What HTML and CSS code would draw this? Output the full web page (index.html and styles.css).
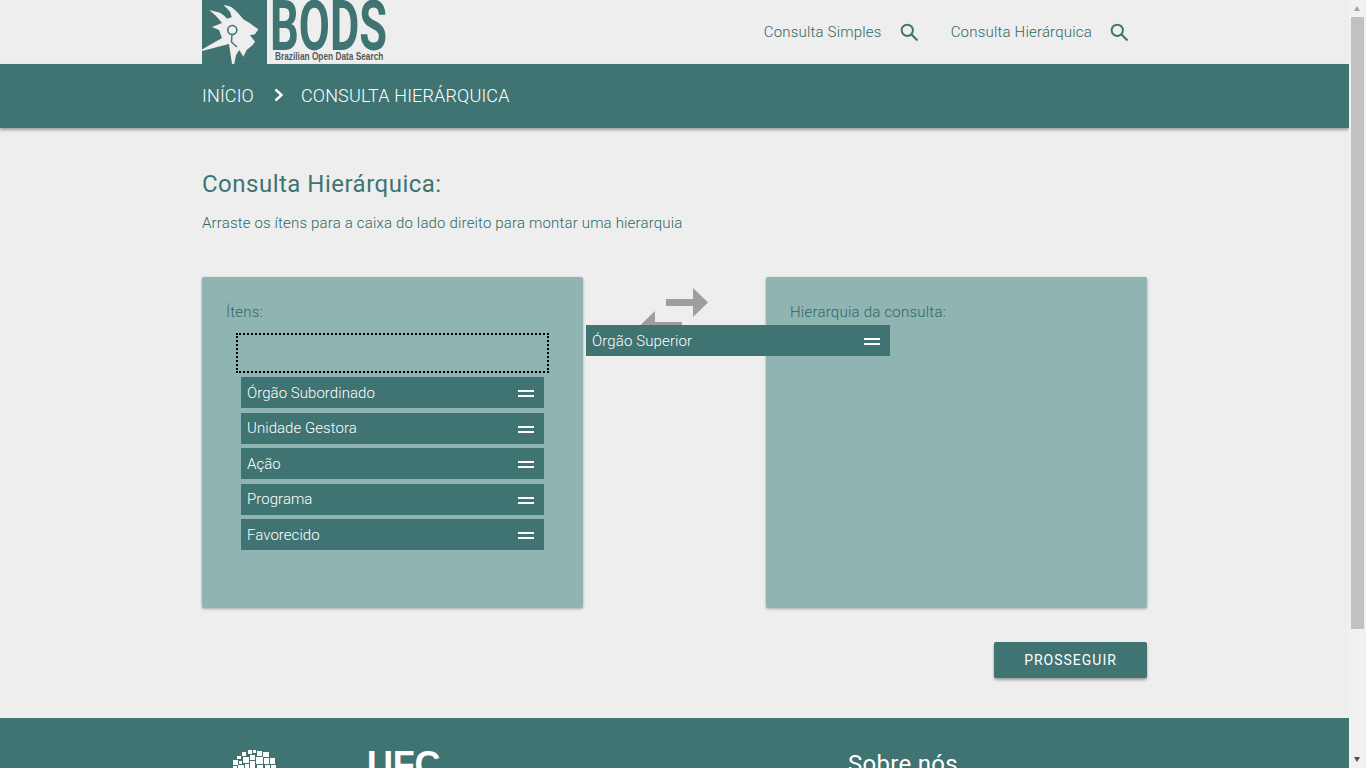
FILE: index.html
```html
<!DOCTYPE html>
<html lang="pt-BR">
<head>
<meta charset="utf-8">
<title>BODS - Consulta Hierárquica</title>
<link rel="stylesheet" href="styles.css">
</head>
<body>
<div class="shell">
  <div class="page">
    <header class="top">
      <div class="wrap top-row">
        <a class="logo">
          <span class="logo-mark">
            <svg viewBox="0 0 65 64" width="65" height="64" aria-hidden="true">
              <path fill="#eeeeee" d="M7.3 10 L18 12.7 Q22 15 25.3 18.7 L29.7 17.3 Q29 14 28 11.7 Q25 8 21.3 5 Q26 5.5 29.7 7.3 Q33 10 36.3 13.3 L41.3 19.3 L48 23.3 L56.3 29.3 L53 34.3 L48 35.3 L53 41.7 L50.7 45 L44.7 50 L41.3 56.7 L37.3 50 L34 55 L32.3 64 L30 64 L27 44 L0 51 L0 49.5 L20 38 L17 30 L10 27 L20 23 Q14 15 7.3 10 Z"/>
              <circle cx="30.3" cy="30" r="4.5" fill="none" stroke="#3f7472" stroke-width="1.6"/>
              <path fill="none" stroke="#3f7472" stroke-width="1.4" d="M30 34.5 L29.5 42 L35 47"/>
            </svg>
          </span>
          <span class="logo-text">
            <span class="logo-name">BODS</span>
            <span class="logo-sub">Brazilian Open Data Search</span>
          </span>
        </a>
        <nav class="nav">
          <a class="nav-link">Consulta Simples
            <svg class="search" viewBox="0 0 18.5 18.5" width="18" height="18" aria-hidden="true"><circle cx="7.5" cy="7.5" r="5.8" fill="none" stroke="#3f7472" stroke-width="2"/><path d="M11.8 11.8 L18 18" stroke="#3f7472" stroke-width="2.2" fill="none"/></svg>
          </a>
          <a class="nav-link">Consulta Hierárquica
            <svg class="search" viewBox="0 0 18.5 18.5" width="18" height="18" aria-hidden="true"><circle cx="7.5" cy="7.5" r="5.8" fill="none" stroke="#3f7472" stroke-width="2"/><path d="M11.8 11.8 L18 18" stroke="#3f7472" stroke-width="2.2" fill="none"/></svg>
          </a>
        </nav>
      </div>
    </header>

    <div class="crumbs">
      <div class="wrap crumbs-row">
        <span>INÍCIO</span>
        <svg class="chev" viewBox="0 0 10 14" width="10" height="14" aria-hidden="true"><path d="M1.5 1.5 L7.5 7 L1.5 12.5" fill="none" stroke="#fff" stroke-width="2.4"/></svg>
        <span>CONSULTA HIERÁRQUICA</span>
      </div>
    </div>

    <main class="wrap content">
      <h1 class="title">Consulta Hierárquica:</h1>
      <p class="lead">Arraste os ítens para a caixa do lado direito para montar uma hierarquia</p>

      <section class="board">
        <div class="panel">
          <h2 class="panel-title">Ítens:</h2>
          <div class="slot"></div>
          <ul class="list">
            <li class="item">Órgão Subordinado<span class="handle"></span></li>
            <li class="item">Unidade Gestora<span class="handle"></span></li>
            <li class="item">Ação<span class="handle"></span></li>
            <li class="item">Programa<span class="handle"></span></li>
            <li class="item">Favorecido<span class="handle"></span></li>
          </ul>
        </div>
        <div class="swap">
          <svg viewBox="0 0 68 52" width="68" height="52" aria-hidden="true">
            <path fill="#9e9e9e" d="M26 11 H53 V0 L68 14.5 L53 29 V18 H26 Z"/>
            <path fill="#9e9e9e" d="M42 34 H15 V23 L0 37.5 L15 52 V41 H42 Z"/>
          </svg>
        </div>
        <div class="panel">
          <h2 class="panel-title">Hierarquia da consulta:</h2>
        </div>
        <div class="item dragging">Órgão Superior<span class="handle"></span></div>
      </section>

      <div class="actions">
        <button class="btn" type="button">PROSSEGUIR</button>
      </div>
    </main>

    <footer class="foot">
      <div class="wrap foot-row">
        <svg class="foot-mark" viewBox="0 0 46 30" width="46" height="30" aria-hidden="true">
          <g fill="#fff">
            <rect x="16" y="0" width="4" height="4"/><rect x="21" y="0" width="3" height="3"/><rect x="25" y="1" width="5" height="5"/>
            <rect x="10" y="2" width="4" height="4"/><rect x="31" y="2" width="6" height="5"/><rect x="5" y="6" width="4" height="3"/>
            <rect x="11" y="7" width="6" height="6"/><rect x="18" y="5" width="5" height="5"/><rect x="24" y="7" width="7" height="7"/>
            <rect x="32" y="8" width="5" height="6"/><rect x="38" y="8" width="5" height="6"/><rect x="1" y="10" width="5" height="5"/>
            <rect x="7" y="11" width="3" height="3"/><rect x="18" y="11" width="5" height="7"/><rect x="6" y="15" width="6" height="5"/>
            <rect x="13" y="14" width="4" height="4"/><rect x="25" y="15" width="6" height="5"/><rect x="33" y="15" width="5" height="5"/>
            <rect x="39" y="15" width="5" height="5"/><rect x="1" y="16" width="4" height="4"/>
          </g>
        </svg>
        <span class="ufc">UFC</span>
        <h2 class="foot-title">Sobre nós</h2>
      </div>
    </footer>
  </div>

  <div class="scrollbar" aria-hidden="true">
    <span class="sb-arrow sb-up"></span>
    <span class="sb-track"><span class="sb-thumb"></span></span>
    <span class="sb-arrow sb-down"></span>
  </div>
</div>
</body>
</html>
```
FILE: styles.css
```css
* { box-sizing: border-box; }
html, body { margin: 0; height: 100%; overflow: hidden; }
body { font-family: Roboto, "Liberation Sans", sans-serif; background: #eeeeee; color: #3f7472; }

.shell { display: flex; height: 768px; overflow: hidden; }
.page { width: 1349px; flex: none; height: 768px; overflow: hidden; }
.wrap { width: 945px; margin-left: 202px; }

/* Header */
.top { height: 64px; }
.top-row { display: flex; justify-content: space-between; height: 64px; }
.logo { display: flex; height: 64px; }
.logo-mark { display: block; width: 65px; height: 64px; background: #3f7472; }
.logo-mark svg { display: block; }
.logo-text { display: block; position: relative; width: 122px; overflow: hidden; }
.logo-name {
  position: absolute; left: 3px; top: 1px;
  font: 700 70px/50px Roboto, sans-serif;
  color: #3f7472;
  transform: scaleX(.645); transform-origin: left top;
}
.logo-sub {
  position: absolute; left: 8px; top: 51px; white-space: nowrap;
  font: bold 10px/12px "Liberation Sans", sans-serif;
  color: #555a5a;
  transform: scaleX(.83); transform-origin: left top;
}
.nav { display: flex; align-items: center; gap: 33px; margin-right: 19px; }
.nav-link { display: flex; align-items: center; gap: 18px; font-size: 15px; font-weight: 300; letter-spacing: .2px; white-space: nowrap; color: #2f6765; }
.search { display: block; }

/* Breadcrumb */
.crumbs { height: 64px; background: #3f7472; box-shadow: 0 2px 3px rgba(0,0,0,.35); position: relative; }
.crumbs-row { display: flex; align-items: center; height: 62px; color: #fff; font-size: 18px; font-weight: 300; letter-spacing: .15px; }
.chev { margin: 0 17px 0 20px; }

/* Content */
.content { position: relative; }
.title { margin: 40px 0 0; font-size: 24px; line-height: 32px; font-weight: 400; letter-spacing: .49px; }
.lead { margin: 13px 0 0; font-size: 15px; line-height: 20px; font-weight: 300; letter-spacing: .17px; color: #2f6765; }
.board { position: relative; display: flex; justify-content: space-between; margin-top: 44px; }
.panel {
  width: 381px; height: 331px; padding: 24px;
  background: #90b4b2; border-radius: 2px;
  box-shadow: 0 1px 3px rgba(0,0,0,.3);
}
.panel-title { margin: 0; padding-top: 1px; font-size: 15px; line-height: 20px; font-weight: 300; letter-spacing: .23px; color: #2f6765; }
.slot { width: 313px; height: 40px; margin: 11px 0 0 10px; border: 2px dotted #000; }
.list { list-style: none; margin: 4px 0 0 15px; padding: 0; }
.item {
  display: flex; align-items: center; justify-content: space-between;
  width: 303px; height: 31px; padding: 0 10px 0 6px; margin-bottom: 4.5px;
  background: #3f7472; color: #fff; font-size: 15px; font-weight: 300; letter-spacing: .05px;
}
.handle { display: block; width: 16px; height: 7px; margin-top: 2px; border-top: 2px solid #fff; border-bottom: 2px solid #fff; }
.swap { position: absolute; left: 438px; top: 11px; }
.swap svg { display: block; }
.dragging { position: absolute; left: 384px; top: 48px; width: 304px; margin: 0; letter-spacing: .12px; }

.actions { display: flex; justify-content: flex-end; margin-top: 34px; }
.btn {
  width: 153px; height: 36px; border: 0; border-radius: 2px;
  background: #3f7472; color: #fff;
  font: 400 14px Roboto, sans-serif; letter-spacing: 1px;
  box-shadow: 0 2px 3px rgba(0,0,0,.35);
}

/* Footer */
.foot { margin-top: 40px; height: 200px; background: #3f7472; color: #fff; }
.foot-row { position: relative; height: 200px; }
.foot-mark { position: absolute; left: 30px; top: 32px; }
.ufc { position: absolute; left: 165px; top: 27px; font: bold 36px/40px "Liberation Sans", sans-serif; letter-spacing: -.3px; }
.foot-title { position: absolute; left: 646px; top: 30px; margin: 0; font-size: 24px; line-height: 32px; font-weight: 400; letter-spacing: .3px; }

/* Scrollbar */
.scrollbar { width: 17px; flex: none; height: 768px; background: #f1f1f1; display: flex; flex-direction: column; }
.sb-arrow { display: block; height: 17px; flex: none; position: relative; }
.sb-arrow::after { content: ""; position: absolute; left: 5px; width: 0; height: 0; border-left: 3.5px solid transparent; border-right: 3.5px solid transparent; }
.sb-up::after { top: 6px; border-bottom: 5px solid #a3a3a3; }
.sb-down::after { top: 6px; border-top: 5px solid #505050; }
.sb-track { display: block; flex: 1; padding: 0 2px; }
.sb-thumb { display: block; height: 612px; background: #c1c1c1; }
```
